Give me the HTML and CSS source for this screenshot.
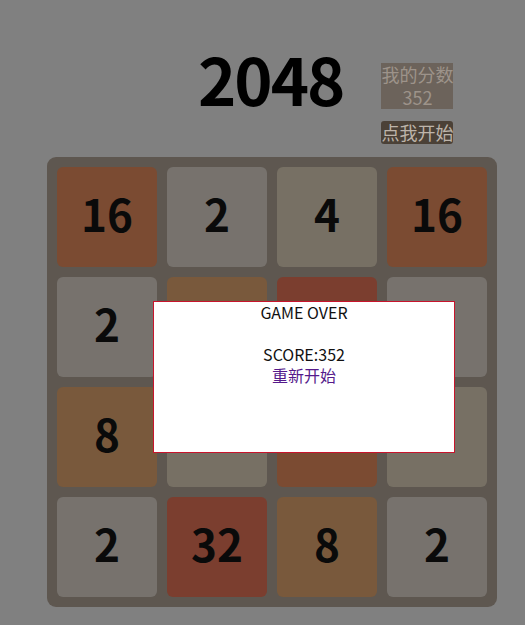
FILE: index.html
```html
<!DOCTYPE html>
<html lang="zh">
<head>
<meta charset="utf-8">
<title>2048</title>
<link rel="stylesheet" href="styles.css">
</head>
<body>
<div class="page">
  <header class="header">
    <h1 class="title">2048</h1>
    <div class="side">
      <div class="score-box">
        <div>我的分数</div>
        <div>352</div>
      </div>
      <a class="start-btn" href="#">点我开始</a>
    </div>
  </header>
  <div class="grid">
    <div class="tile t16">16</div>
    <div class="tile t2">2</div>
    <div class="tile t4">4</div>
    <div class="tile t16">16</div>

    <div class="tile t2">2</div>
    <div class="tile t8">8</div>
    <div class="tile t32">32</div>
    <div class="tile t2">2</div>

    <div class="tile t8">8</div>
    <div class="tile t4">4</div>
    <div class="tile t16">16</div>
    <div class="tile t4">4</div>

    <div class="tile t2">2</div>
    <div class="tile t32">32</div>
    <div class="tile t8">8</div>
    <div class="tile t2">2</div>
  </div>
  <div class="gameover">
    <div>GAME OVER</div>
    <div>&nbsp;</div>
    <div>SCORE:352</div>
    <a class="restart" href="#">重新开始</a>
  </div>
</div>
</body>
</html>
```

FILE: styles.css
```css
html, body {
  margin: 0;
  padding: 0;
  background: #808080;
}

.page {
  position: relative;
  width: 525px;
  height: 625px;
  font-family: "Noto Sans CJK SC", "Noto Sans", sans-serif;
}

.header {
  display: flex;
  align-items: flex-start;
  padding: 45px 0 0 198px;
}

.title {
  margin: 0;
  font-size: 65px;
  line-height: 66px;
  letter-spacing: -2px;
  font-weight: bold;
  color: #000;
}

.side {
  display: flex;
  flex-direction: column;
  align-items: center;
  margin-left: 38px;
  margin-top: 18px;
  gap: 12px;
}

.score-box {
  width: 72px;
  background: #6c635b;
  color: #9d938a;
  font-size: 18px;
  line-height: 23px;
  text-align: center;
}

.start-btn {
  display: block;
  width: 72px;
  background: #4b4137;
  color: #bdb4aa;
  font-size: 18px;
  line-height: 23px;
  text-align: center;
  text-decoration: none;
  border-radius: 3px;
}

.grid {
  margin: 13px 0 0 47px;
  width: 450px;
  height: 450px;
  box-sizing: border-box;
  padding: 10px;
  display: grid;
  grid-template-columns: repeat(4, 100px);
  grid-template-rows: repeat(4, 100px);
  gap: 10px;
  background: #5e5750;
  border-radius: 9px;
}

.tile {
  border-radius: 6px;
  display: flex;
  align-items: center;
  justify-content: center;
  padding-bottom: 8px;
  box-sizing: border-box;
  font-size: 44px;
  font-weight: bold;
  color: #0a0a0a;
}

.t2 { background: #77726d; }
.t4 { background: #777064; }
.t8 { background: #79593c; }
.t16 { background: #7b4b32; }
.t32 { background: #7b3e2f; }

.gameover {
  position: absolute;
  left: 153px;
  top: 301px;
  width: 300px;
  height: 150px;
  background: #fff;
  border: 1px solid #c8142c;
  text-align: center;
  font-size: 16px;
  line-height: 21px;
  color: #111;
}

.restart {
  color: #551a8b;
  text-decoration: none;
}
```
